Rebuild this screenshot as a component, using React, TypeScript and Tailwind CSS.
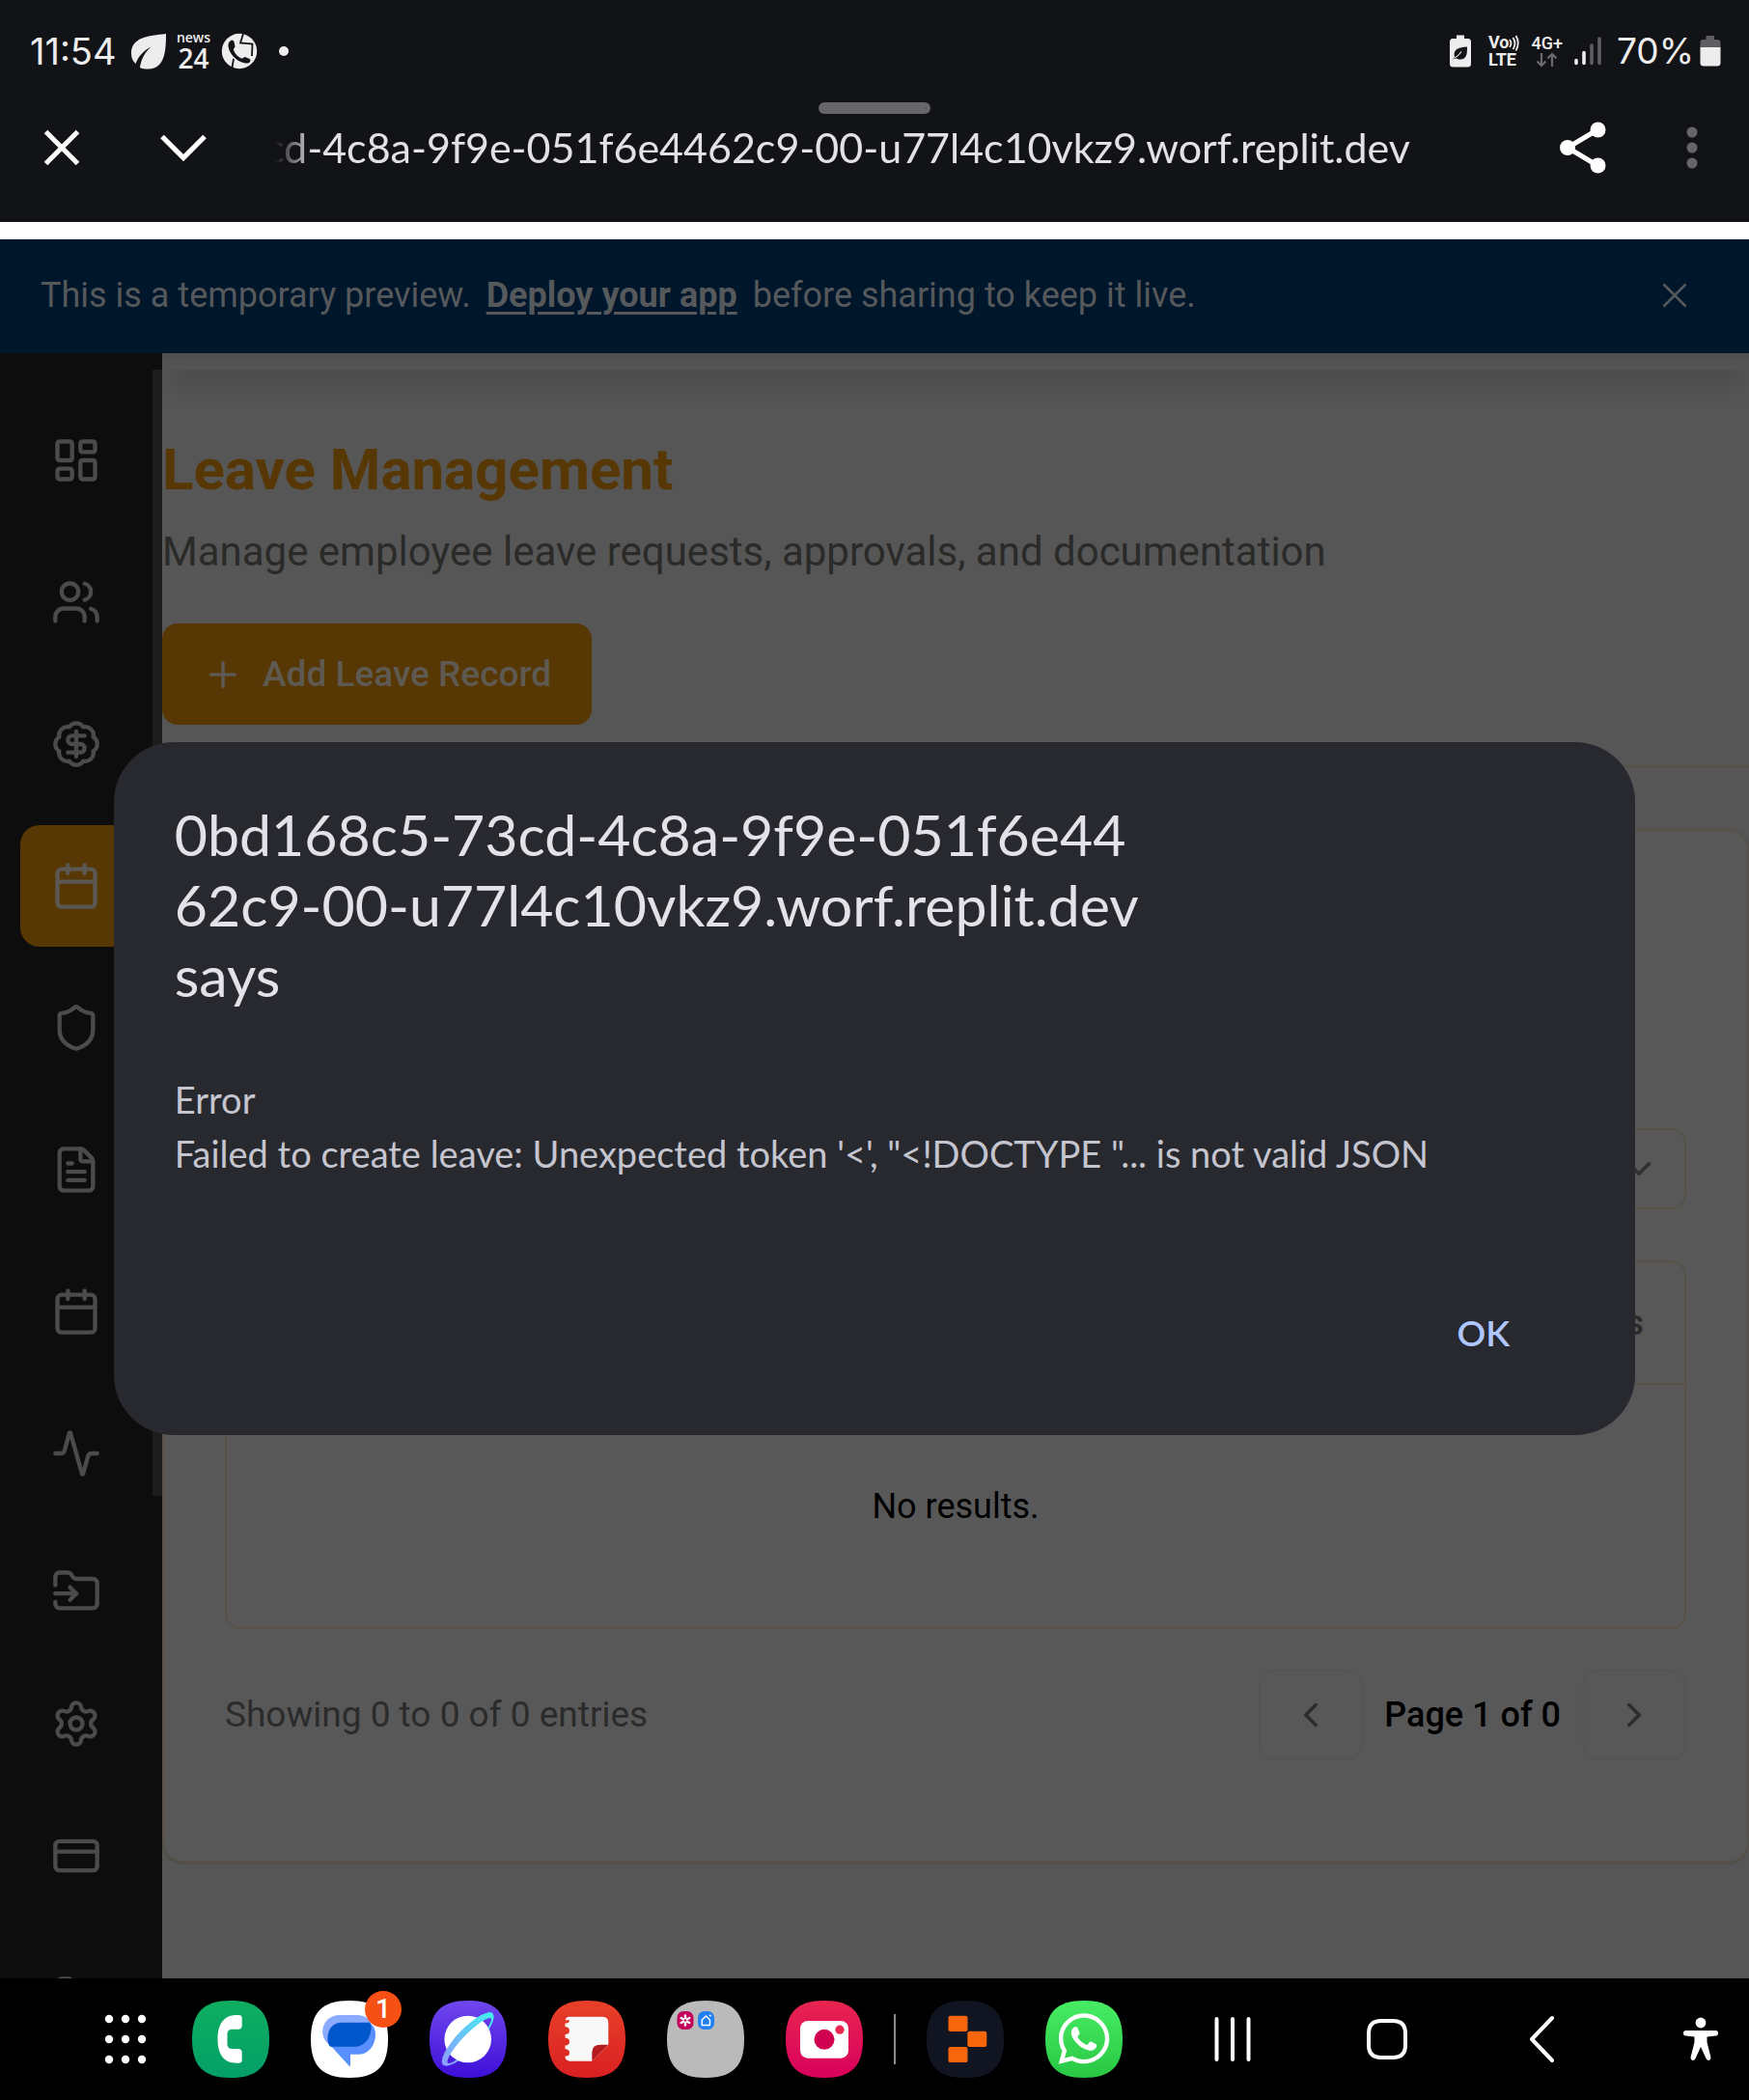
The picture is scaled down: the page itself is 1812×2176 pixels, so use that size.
import React from 'react';
import {
  LayoutDashboard,
  Users,
  BadgeDollarSign,
  Calendar,
  Shield,
  FileText,
  Activity,
  FolderInput,
  Settings,
  CreditCard,
  LogOut,
  Plus,
  ChevronDown,
  ChevronLeft,
  ChevronRight,
} from 'lucide-react';
import { FaWhatsapp } from 'react-icons/fa';

/* ---------- System status bar ---------- */

function LeafIcon() {
  return (
    <svg width="38" height="38" viewBox="0 0 38 38" aria-hidden="true">
      <path
        d="M37 1C37 18 36 37 19 37.500C15 37.500 11.500 37 10 36C11 29 14 21 21.500 14.500C14 18 8 25 5.500 32C2 29 1 25 1 21C1 5 18 3 37 1Z"
        fill="#ededed"
      />
    </svg>
  );
}

function CallShieldIcon() {
  return (
    <svg width="38" height="38" viewBox="0 0 38 38" aria-hidden="true">
      <circle cx="19" cy="19" r="18.200" fill="#ededed" />
      <path d="M23 1L20 10.500L32.500 11.500L32 24" fill="none" stroke="#121317" strokeWidth="1.800" />
      <path d="M13 27L11.500 36" stroke="#121317" strokeWidth="1.800" />
      <path
        d="M8.500 9.500C10.500 7 13 7.500 13.500 9.500L14.500 14C14.500 16 12.500 16 13 18C14.500 22 17.500 25 21 26.500C23 27 23.500 25 25 25L29.500 27C31.500 28.500 30 31 27.500 31.500C18 32 8 22 7.500 13.500C7.500 12 7.500 10.800 8.500 9.500Z"
        fill="#121317"
      />
    </svg>
  );
}

function BatterySaverIcon() {
  return (
    <svg width="22" height="34" viewBox="0 0 22 34" aria-hidden="true">
      <path
        d="M7 0.500H15V4H19Q22 4 22 7.500V30Q22 33.500 18.500 33.500H3.500Q0 33.500 0 30V7.500Q0 4 3 4H7Z"
        fill="#ededed"
      />
      <path
        d="M18 12.500C18 20 17.500 25.500 11 25.500C9 25.500 7.500 25 6.500 24.500L3 25.500L5 22.500C3 16 9 12.500 18 12.500Z"
        fill="#121317"
      />
      <path d="M3.500 24.500C7 23.500 9.500 21 12 17.500" fill="none" stroke="#ededed" strokeWidth="1.200" />
    </svg>
  );
}

function VolteIcon() {
  return (
    <div className="flex flex-col text-[18px] leading-[18px] font-bold">
      <div className="flex items-center">
        <span>Vo</span>
        <svg width="11" height="17" viewBox="0 0 11 17" aria-hidden="true">
          <path d="M1 5Q4 9 1 13M4.500 3Q8.500 9 4.500 15M7.500 1Q12 8.500 7.500 16.500" fill="none" stroke="#ededed" strokeWidth="1.800" />
        </svg>
      </div>
      <span>LTE</span>
    </div>
  );
}

function NetworkIcon() {
  return (
    <div className="flex flex-col items-center text-[18px] leading-[18px] font-medium">
      <span>4G+</span>
      <svg width="23" height="16" viewBox="0 0 23 16" aria-hidden="true">
        <path d="M6 1V14M1.500 9.500L6 14L10.500 9.500M17 15V2M12.500 6.500L17 2L21.500 6.500" fill="none" stroke="#6a6a6c" strokeWidth="2.200" />
      </svg>
    </div>
  );
}

function SignalIcon() {
  return (
    <svg width="28" height="30" viewBox="0 0 28 30" strokeWidth="3.600" strokeLinecap="round" aria-hidden="true">
      <path d="M2 24.500V27.500M10 16.500V27.500" stroke="#ededed" />
      <path d="M18 9V27.500M26 2V27.500" stroke="#5f5f61" />
    </svg>
  );
}

function BatteryIcon() {
  return (
    <svg width="22" height="32" viewBox="0 0 22 32" aria-hidden="true">
      <path d="M6.500 1Q6.500 0 7.500 0H14Q15 0 15 1V4H18Q21.500 4 21.500 7V13H0.500V7Q0.500 4 3.500 4H6.500Z" fill="#5f5f61" />
      <path d="M0.500 12H21.500V28Q21.500 31.500 18 31.500H4Q0.500 31.500 0.500 28Z" fill="#ededed" />
    </svg>
  );
}

function StatusBar() {
  return (
    <div className="flex h-[106px] items-center justify-between pr-[29px] pl-[31px] text-[#ededed]">
      <div className="flex items-center">
        <span className="font-['Inter',sans-serif] text-[38px]">11:54</span>
        <div className="ml-3.5 flex items-center gap-2.5">
          <LeafIcon />
          <div className="flex w-9 flex-col items-center font-['Open_Sans',sans-serif] font-semibold">
            <span className="text-[14px] leading-[14px]">news</span>
            <span className="text-[28px] leading-[28px]">24</span>
          </div>
          <CallShieldIcon />
        </div>
        <span className="ml-[22px] size-2.5 rounded-full bg-[#ededed]" />
      </div>
      <div className="flex items-center">
        <div className="mr-4 flex items-center gap-3">
          <span className="mr-1.5">
            <BatterySaverIcon />
          </span>
          <VolteIcon />
          <NetworkIcon />
          <SignalIcon />
        </div>
        <span className="mr-1.5 font-['Inter',sans-serif] text-[37px]">70%</span>
        <BatteryIcon />
      </div>
    </div>
  );
}

/* ---------- Browser toolbar ---------- */

function BrowserToolbar() {
  return (
    <div className="flex h-[94px] items-center">
      <button type="button" aria-label="Close tab" className="ml-[45px]">
        <svg width="38" height="38" viewBox="0 0 38 38" aria-hidden="true">
          <path d="M2.500 2.500L35.500 35.500M35.500 2.500L2.500 35.500" stroke="#fff" strokeWidth="5" />
        </svg>
      </button>
      <button type="button" aria-label="Minimize" className="ml-[82px]">
        <svg width="50" height="38" viewBox="0 0 50 38" aria-hidden="true">
          <path d="M3 7.500L25 29.500L47 7.500" fill="none" stroke="#fff" strokeWidth="5.200" />
        </svg>
      </button>
      <div className="ml-[70px] flex min-w-0 flex-1 justify-end overflow-hidden [mask-image:linear-gradient(to_right,transparent,black_40px)]">
        <span className="font-['Lato',sans-serif] text-[43px] leading-[60px] whitespace-nowrap text-[#e3e1e8]">
          cd-4c8a-9f9e-051f6e4462c9-00-u77l4c10vkz9.worf.replit.dev
        </span>
      </div>
      <button type="button" aria-label="Share" className="ml-[154px]">
        <svg width="50" height="54" viewBox="0 0 50 54" aria-hidden="true">
          <path d="M40 8.500L9 27L40 45.500" fill="none" stroke="#fff" strokeWidth="5" />
          <circle cx="40.500" cy="8.500" r="8" fill="#fff" />
          <circle cx="9" cy="27" r="8" fill="#fff" />
          <circle cx="40.500" cy="45.500" r="8" fill="#fff" />
        </svg>
      </button>
      <button type="button" aria-label="More options" className="mr-[53px] ml-[82px]">
        <svg width="12" height="44" viewBox="0 0 12 44" fill="#66666a" aria-hidden="true">
          <circle cx="6" cy="6" r="5.500" />
          <circle cx="6" cy="22" r="5.500" />
          <circle cx="6" cy="38" r="5.500" />
        </svg>
      </button>
    </div>
  );
}

function PreviewBanner() {
  return (
    <div className="flex h-[118px] shrink-0 items-center justify-between bg-[#00162b] pr-[61px] pb-0.5 pl-[42px] text-[36px] text-[#56595c]">
      <p className="flex items-center gap-4">
        <span>This is a temporary preview.</span>
        <a href="#deploy" className="font-bold underline decoration-[3px] underline-offset-[5px]">
          Deploy your app
        </a>
        <span>before sharing to keep it live.</span>
      </p>
      <button type="button" aria-label="Dismiss banner">
        <svg width="32" height="32" viewBox="0 0 32 32" aria-hidden="true">
          <path d="M4.500 4.500L27.500 27.500M27.500 4.500L4.500 27.500" stroke="#56595c" strokeWidth="2.600" />
        </svg>
      </button>
    </div>
  );
}

/* ---------- Sidebar ---------- */

const navItems = [
  { label: 'Dashboard', icon: LayoutDashboard, space: '' },
  { label: 'Employees', icon: Users, space: 'mt-[21px]' },
  { label: 'Payroll', icon: BadgeDollarSign, space: 'mt-[21px]' },
  { label: 'Leave', icon: Calendar, space: 'mt-[21px]', active: true },
  { label: 'Compliance', icon: Shield, space: 'mt-[21px]' },
  { label: 'Documents', icon: FileText, space: 'mt-[21px]' },
  { label: 'Schedule', icon: Calendar, space: 'mt-[21px]' },
  { label: 'Activity', icon: Activity, space: 'mt-[21px]' },
  { label: 'Import', icon: FolderInput, space: 'mt-[17px]' },
  { label: 'Settings', icon: Settings, space: 'mt-[11px]' },
  { label: 'Billing', icon: CreditCard, space: 'mt-[11px]' },
  { label: 'Log out', icon: LogOut, space: 'mt-[21px]' },
];

function Sidebar() {
  return (
    <nav className="relative flex w-[168px] shrink-0 flex-col overflow-hidden bg-[#0d0d0d] pt-12 pr-[31px] pl-[21px]">
      {navItems.map(({ label, icon: Icon, space, active }) => (
        <a
          key={label}
          href={'#' + label.toLowerCase().replace(' ', '-')}
          aria-label={label}
          className={`flex h-[126px] shrink-0 items-center justify-center rounded-[20px] ${space} ${
            active ? 'bg-[#573703] text-[#5b5853]' : 'text-[#4b4b4b]'
          }`}
        >
          <Icon size={52} strokeWidth={2} />
        </a>
      ))}
      <span className="absolute top-[17px] right-0 h-[1167px] w-2.5 bg-[#1c1c1c]" />
    </nav>
  );
}

/* ---------- Leave page ---------- */

function LeavePage() {
  return (
    <main className="min-w-0 flex-1 overflow-hidden bg-[#565656]">
      <div className="h-[17px] bg-linear-to-b from-[#4f4f4f] to-[#555555]" />
      <div className="mx-4 h-0 shadow-[0_4px_28px_8px_rgba(0,0,0,0.22)] [clip-path:inset(0_-16px_-60px_-16px)]" />
      <h1 className="mt-[68px] text-[60px] leading-[72px] font-bold text-[#573703]">Leave Management</h1>
      <p className="mt-[19px] text-[42px] leading-[60px] text-[#2a2a29]">
        Manage employee leave requests, approvals, and documentation
      </p>
      <button
        type="button"
        className="mt-11 flex h-[105px] items-center gap-5 rounded-2xl bg-[#573703] px-[42px] text-[37px] font-medium text-[#5e5a52]"
      >
        <Plus size={42} strokeWidth={2} />
        Add Leave Record
      </button>
      <hr className="mt-[42px] border-t-2 border-[#575148]" />

      <section className="mt-16 rounded-[21px] border-2 border-[#575148] bg-[#585858] px-[63px] pt-[308px] pb-[104px] shadow-sm">
        <label className="relative ml-auto flex h-[84px] w-[420px] items-center">
          <select
            aria-label="Filter by status"
            className="size-full appearance-none rounded-2xl border-2 border-[#575148] bg-transparent pl-8 text-[36px] text-black"
          >
            <option>All</option>
          </select>
          <ChevronDown size={42} className="pointer-events-none absolute right-7 text-[#303030]" />
        </label>

        <div className="mt-[53px] rounded-2xl border-2 border-[#575148]">
          <table className="w-full text-[36px]">
            <thead>
              <tr className="border-b-2 border-[#575148]">
                <th className="h-[126px] pr-[42px] text-right font-medium text-[#2b2b2b]">Actions</th>
              </tr>
            </thead>
            <tbody>
              <tr>
                <td className="h-[252px] text-center text-black">No results.</td>
              </tr>
            </tbody>
          </table>
        </div>

        <div className="mt-[42px] flex items-center justify-between">
          <p className="text-[37px] text-[#2b2b2b]">Showing 0 to 0 of 0 entries</p>
          <div className="flex items-center gap-[22px] text-[36px]">
            <button
              type="button"
              aria-label="Previous page"
              className="flex h-[94px] w-[108px] items-center justify-center rounded-2xl border-2 border-[#57554f] text-[#2c2c2c]"
            >
              <ChevronLeft size={42} />
            </button>
            <span className="font-medium text-black">Page 1 of 0</span>
            <button
              type="button"
              aria-label="Next page"
              className="flex h-[94px] w-[108px] items-center justify-center rounded-2xl border-2 border-[#57554f] text-[#2c2c2c]"
            >
              <ChevronRight size={42} />
            </button>
          </div>
        </div>
      </section>
    </main>
  );
}

/* ---------- Alert dialog ---------- */

function AlertDialog() {
  return (
    <div className="absolute inset-x-0 top-20 bottom-0 flex items-center justify-center">
      <div
        role="alertdialog"
        aria-labelledby="alert-title"
        aria-describedby="alert-body"
        className="flex w-[87%] flex-col rounded-[62px] bg-[#28292e] px-[63px] pt-[59px] pb-[58px] font-['Lato',sans-serif]"
      >
        <h2 id="alert-title" className="text-[59px] leading-[73px] text-[#e3e2e9]">
          0bd168c5-73cd-4c8a-9f9e-051f6e44
          <br />
          62c9-00-u77l4c10vkz9.worf.replit.dev
          <br />
          says
        </h2>
        <p id="alert-body" className="mt-16 text-[38px] leading-14 text-[#c5c5d0]">
          Error
          <br />
          Failed to create leave: Unexpected token '&lt;', "&lt;!DOCTYPE "... is not valid JSON
        </p>
        <button
          type="button"
          className="mt-[110px] mr-[19px] h-24 self-end rounded-full px-12 text-[37px] font-semibold text-[#afc6ff]"
        >
          OK
        </button>
      </div>
    </div>
  );
}

/* ---------- Taskbar ---------- */

const squircle = 'M40 0C68 0 80 12 80 40S68 80 40 80S0 68 0 40S12 0 40 0Z';

function AppIcon({
  id,
  label,
  from,
  to,
  children,
}: {
  id: string;
  label: string;
  from: string;
  to: string;
  children?: React.ReactNode;
}) {
  return (
    <button type="button" aria-label={label} className="shrink-0">
      <svg width="80" height="80" viewBox="0 0 80 80" aria-hidden="true">
        <defs>
          <linearGradient id={id} x1="0" y1="0" x2="0" y2="1">
            <stop offset="0" stopColor={from} />
            <stop offset="1" stopColor={to} />
          </linearGradient>
        </defs>
        <path d={squircle} fill={`url(#${id})`} />
        {children}
      </svg>
    </button>
  );
}

function Taskbar() {
  return (
    <footer className="relative z-10 flex h-[126px] shrink-0 items-center bg-black pl-[108px]">
      <button type="button" aria-label="All apps" className="shrink-0">
        <svg width="44" height="54" viewBox="0 0 44 54" fill="#fff" aria-hidden="true">
          {[6, 27, 48].map((y) => [5, 22, 39].map((x) => <circle key={`${x}-${y}`} cx={x} cy={y} r="4.200" />))}
        </svg>
      </button>
      <div className="ml-[47px] flex items-center gap-[43px]">
        <AppIcon id="phone" label="Phone" from="#0fae60" to="#049f68">
          <path
            d="M46 15H48.500Q51.700 15 51.700 18.200V25.700Q51.700 29.700 47.700 29.700H41.500Q36.500 29.700 36.500 34.700V45Q36.500 50 41.500 50H47.700Q51.700 50 51.700 54V61.500Q51.700 64.700 48.500 64.700H46C34 64.700 26.500 57 26.500 40S34 15 46 15Z"
            fill="#fff"
          />
        </AppIcon>
        <div className="relative flex">
          <AppIcon id="messages" label="Messages, 1 unread" from="#ffffff" to="#ffffff">
            <path d="M62 24C66 27 67 31 67 35C67 46 60 55.700 50 55.700H41V66.500Q41 69 39 67L20 46Z" fill="#5a8fff" />
            <path d="M30 15H48C57 15 62 20 63 26L58 42L20 46C14 42 12.200 37 12.200 32C12.200 22 20 15 30 15Z" fill="#8aabff" />
            <path d="M32 22.700H61Q63.500 25 62.300 31C61 41 54 47.700 46 47.700H20Q17 44 17.500 38C18 28 24 22.700 32 22.700Z" fill="#0057cc" />
          </AppIcon>
          <span className="absolute -top-2.5 -right-3.5 flex size-[38px] items-center justify-center rounded-full bg-[#f75014] text-[28px] font-medium text-white">
            1
          </span>
        </div>
        <AppIcon id="internet" label="Internet" from="#7047ee" to="#3e0fd8">
          <defs>
            <linearGradient id="ring" x1="0" y1="0" x2="1" y2="0">
              <stop offset="0" stopColor="#8f9bff" />
              <stop offset="1" stopColor="#41f0ee" />
            </linearGradient>
            <clipPath id="ringFront">
              <rect x="-40" y="-20" width="80" height="20" />
            </clipPath>
          </defs>
          <g transform="translate(39.700 40) rotate(-46)">
            <path
              d="M-37 0A37 11 0 1 1 37 0A37 11 0 1 1 -37 0ZM-32 2A32 6.500 0 1 0 32 2A32 6.500 0 1 0 -32 2Z"
              fill="url(#ring)"
              fillRule="evenodd"
            />
          </g>
          <circle cx="39.700" cy="40" r="24.300" fill="#fff" />
          <g transform="translate(39.700 40) rotate(-46)">
            <path
              d="M-37 0A37 11 0 1 1 37 0A37 11 0 1 1 -37 0ZM-32 2A32 6.500 0 1 1 32 2A32 6.500 0 1 1 -32 2Z"
              fill="url(#ring)"
              fillRule="evenodd"
              clipPath="url(#ringFront)"
            />
          </g>
        </AppIcon>
        <AppIcon id="notes" label="Notes" from="#e8402a" to="#d82021">
          <path
            d="M22 16.700H56Q62.300 16.700 62.300 23V45.700L45.300 62.700H22Q17.500 62 17.500 57.500Q22 58 22 54Q22 50.500 17.500 50V46.500Q22 46.500 22 42.500Q22 39 17.500 38.500V35Q22 35 22 31Q22 27.500 17.500 27V23.500Q21 24 22 21Q22 19.500 17.800 20.500Q18 17 22 16.700Z"
            fill="#f8f8f8"
          />
          <path d="M62.300 45.700L45.300 62.700V54Q45.300 45.700 54 45.700Z" fill="#b31b1f" />
        </AppIcon>
        <AppIcon id="folder" label="App folder" from="#bababa" to="#bababa">
          <rect x="10.500" y="11" width="17" height="19" rx="6.500" fill="#c4005c" />
          <path d="M19 15.500V25.500M14.700 18L23.300 23M23.300 18L14.700 23" stroke="#fff" strokeWidth="2.400" strokeLinecap="round" />
          <circle cx="19" cy="20.500" r="1.200" fill="#c4005c" />
          <rect x="32" y="11" width="17" height="19" rx="6.500" fill="#2380f2" />
          <path d="M36.200 25.500V20L40.500 16L44.500 20V25.500Z" fill="none" stroke="#fff" strokeWidth="1.400" strokeLinejoin="round" />
          <circle cx="44.800" cy="15.500" r="1" fill="#fff" />
        </AppIcon>
        <AppIcon id="camera" label="Camera" from="#e8254f" to="#d8005c">
          <rect x="15" y="21" width="50" height="38.700" rx="8" fill="#fff" />
          <circle cx="40" cy="40.300" r="10.500" fill="#d00050" />
          <circle cx="56" cy="30.200" r="4.600" fill="#e8254f" />
        </AppIcon>
      </div>
      <span className="mx-8 h-[52px] w-0.5 shrink-0 bg-[#8c8c8c]" />
      <div className="flex items-center gap-[43px]">
        <AppIcon id="replit" label="Replit" from="#111522" to="#111522">
          <g fill="#f8660c">
            <rect x="22.500" y="15.700" width="20" height="16.200" rx="2.200" />
            <rect x="42.300" y="31.800" width="20" height="16.200" rx="2.200" />
            <rect x="22.500" y="47.900" width="20" height="16.200" rx="2.200" />
          </g>
        </AppIcon>
        <AppIcon id="whatsapp" label="WhatsApp" from="#47ec64" to="#29c743">
          <FaWhatsapp x="10" y="9.500" size={60} color="#fff" />
        </AppIcon>
      </div>
      <div className="ml-auto flex items-center">
        <button type="button" aria-label="Recent apps" className="flex w-40 justify-center">
          <svg width="40" height="48" viewBox="0 0 40 48" stroke="#fff" strokeWidth="4" strokeLinecap="round" aria-hidden="true">
            <path d="M3.500 3V45M20 3V45M36.500 3V45" />
          </svg>
        </button>
        <button type="button" aria-label="Home" className="flex w-40 justify-center">
          <svg width="44" height="44" viewBox="0 0 44 44" aria-hidden="true">
            <path
              d="M16 3H28C37 3 41 8 41 16V28C41 37 36 41 28 41H16C7 41 3 36 3 28V16C3 7 8 3 16 3Z"
              fill="none"
              stroke="#fff"
              strokeWidth="4"
            />
          </svg>
        </button>
        <button type="button" aria-label="Back" className="flex w-40 justify-center">
          <svg width="26" height="50" viewBox="0 0 26 50" aria-hidden="true">
            <path d="M24 3L3 25L24 47" fill="none" stroke="#fff" strokeWidth="4" strokeLinecap="round" strokeLinejoin="round" />
          </svg>
        </button>
        <button type="button" aria-label="Accessibility" className="ml-[35px] flex w-[100px] justify-center">
          <svg width="38" height="46" viewBox="0 0 38 46" fill="#fff" aria-hidden="true">
            <circle cx="19" cy="6" r="5.400" />
            <path d="M3.500 14H34.500Q37 14 37 16.800T34.500 19.500L25.500 20.500V26L29.500 42Q29.500 44.500 27.500 45Q25.500 45 24.500 43L19 31L13.500 43Q12.500 45 10.500 45Q8.500 44.500 8.500 42L12.500 26V20.500L3.500 19.500Q1 19.500 1 16.800T3.500 14Z" />
          </svg>
        </button>
      </div>
    </footer>
  );
}

export default function App() {
  return (
    <div className="relative flex h-screen flex-col overflow-hidden bg-white font-['Roboto',sans-serif]">
      <header className="relative mb-[18px] shrink-0 bg-[#121317] pb-[30px]">
        <StatusBar />
        <span className="absolute top-[106px] left-1/2 h-3 w-[116px] -translate-x-1/2 rounded-md bg-[#66666a]" />
        <BrowserToolbar />
      </header>
      <PreviewBanner />
      <div className="flex min-h-0 flex-1">
        <Sidebar />
        <LeavePage />
      </div>
      <AlertDialog />
      <Taskbar />
    </div>
  );
}
